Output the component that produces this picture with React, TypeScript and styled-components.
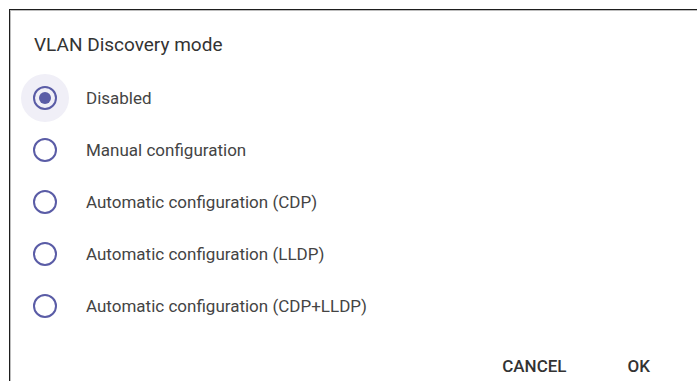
import styled, { createGlobalStyle } from "styled-components";
import { useState } from "react";

const options = [
  "Disabled",
  "Manual configuration",
  "Automatic configuration (CDP)",
  "Automatic configuration (LLDP)",
  "Automatic configuration (CDP+LLDP)",
];

const GlobalStyle = createGlobalStyle`
  html, body {
    margin: 0;
    padding: 0;
    background: #fff;
    overflow: hidden;
    height: 100%;
  }
  body {
    font-family: Roboto, "Liberation Sans", sans-serif;
  }
`;

const App = () => {
  const [selected, setSelected] = useState(0);

  return (
    <>
      <GlobalStyle />
      <Dialog>
        <Title>VLAN Discovery mode</Title>
        <OptionList>
          {options.map((label, idx) => (
            <Option key={idx} onClick={() => setSelected(idx)}>
              <RadioWrap $active={selected === idx}>
                <RadioRing>{selected === idx && <RadioDot />}</RadioRing>
              </RadioWrap>
              <Label>{label}</Label>
            </Option>
          ))}
        </OptionList>
        <Actions>
          <ActionBtn>CANCEL</ActionBtn>
          <ActionBtn>OK</ActionBtn>
        </Actions>
      </Dialog>
    </>
  );
};

export default App;

const Dialog = styled.div`
  margin: 9px 0 0 9px;
  border-top: 1px solid #1e1e1e;
  border-left: 1px solid #1e1e1e;
  box-shadow: inset 1px 1px 0 #bdbdbd;
  background: #fff;
  height: calc(100vh - 9px);
  box-sizing: border-box;
  overflow: hidden;
`;

const Title = styled.div`
  padding: 24px 0 0 24px;
  font-size: 19px;
  line-height: 22px;
  color: #333;
`;

const OptionList = styled.ul`
  list-style: none;
  margin: 16px 0 0;
  padding: 0;
`;

const Option = styled.li`
  display: flex;
  align-items: center;
  height: 52px;
  padding-left: 11px;
  gap: 17px;
  cursor: pointer;
`;

const RadioWrap = styled.div<{ $active: boolean }>`
  width: 48px;
  height: 48px;
  border-radius: 50%;
  display: flex;
  align-items: center;
  justify-content: center;
  background: ${(p) => (p.$active ? "#f0eff7" : "transparent")};
`;

const RadioRing = styled.div`
  width: 24px;
  height: 24px;
  box-sizing: border-box;
  border: 2.5px solid #5a5ca6;
  border-radius: 50%;
  display: flex;
  align-items: center;
  justify-content: center;
`;

const RadioDot = styled.div`
  width: 12px;
  height: 12px;
  border-radius: 50%;
  background: #5a5ca6;
`;

const Label = styled.span`
  font-size: 17px;
  color: #444;
`;

const Actions = styled.div`
  display: flex;
  justify-content: flex-end;
  align-items: center;
  gap: 61px;
  padding: 23px 47px 0 0;
`;

const ActionBtn = styled.button`
  border: none;
  outline: none;
  background: transparent;
  padding: 0;
  font-family: Roboto, "Liberation Sans", sans-serif;
  font-size: 17px;
  font-weight: 500;
  color: #333;
  line-height: 22px;
  cursor: pointer;
`;
